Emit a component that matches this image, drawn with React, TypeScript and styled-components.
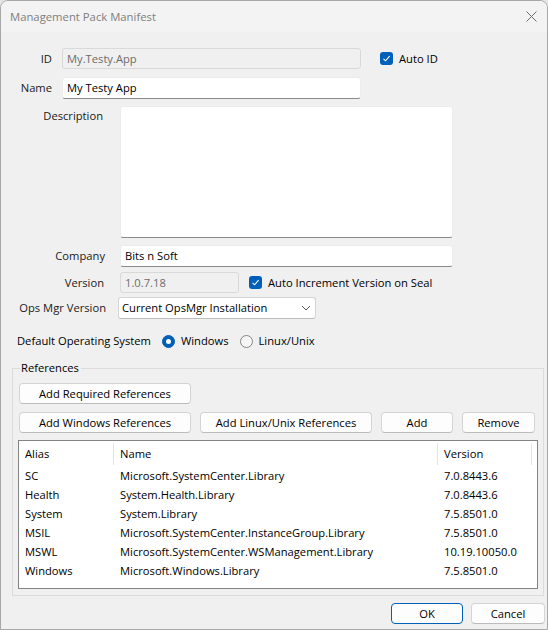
import styled, { createGlobalStyle } from "styled-components";

const Global = createGlobalStyle`
  html, body {
    margin: 0;
    padding: 0;
    background: #e4e4e4;
  }
  body {
    font-family: "Open Sans", "Noto Sans", sans-serif;
    font-size: 11.2px;
    color: #1a1a1a;
  }
`;

const Window = styled.div`
  width: 548px;
  height: 630px;
  box-sizing: border-box;
  border: 1px solid #a8a8a8;
  border-radius: 8px 8px 0 0;
  background: #f0f0f0;
  display: flex;
  flex-direction: column;
  overflow: hidden;
`;

const TitleBar = styled.div`
  height: 31px;
  flex: none;
  box-sizing: border-box;
  padding: 0 9px 1px 9px;
  background: #f3f3f3;
  display: flex;
  align-items: center;
  justify-content: space-between;
  color: #808080;
  font-size: 11.3px;
`;

const Body = styled.div`
  display: flex;
  flex-direction: column;
`;

const Row = styled.div<{ $mt: number; $h: number; $pl?: number }>`
  display: flex;
  align-items: center;
  margin-top: ${(p) => p.$mt}px;
  height: ${(p) => p.$h}px;
  padding-left: ${(p) => p.$pl ?? 0}px;
`;

const Label = styled.div<{ $w: number; $gap: number; $top?: boolean }>`
  width: ${(p) => p.$w}px;
  margin-right: ${(p) => p.$gap}px;
  text-align: right;
  flex: none;
  white-space: nowrap;
  align-self: ${(p) => (p.$top ? "flex-start" : "center")};
  padding-top: ${(p) => (p.$top ? 2 : 0)}px;
  padding-bottom: ${(p) => (p.$top ? 0 : 1)}px;
`;

const Field = styled.div<{ $w: number; $h: number; $disabled?: boolean }>`
  width: ${(p) => p.$w}px;
  height: ${(p) => p.$h}px;
  box-sizing: border-box;
  flex: none;
  display: flex;
  align-items: center;
  padding: 0 0 1px 4px;
  border-radius: 3px;
  background: ${(p) => (p.$disabled ? "#f0f0f0" : "#ffffff")};
  color: ${(p) => (p.$disabled ? "#6d6d6d" : "#000000")};
  border: 1px solid ${(p) => (p.$disabled ? "#d9d9d9" : "#ececec")};
  border-bottom-color: ${(p) => (p.$disabled ? "#d9d9d9" : "#8a8a8a")};
`;

const TextArea = styled(Field)`
  align-items: flex-start;
`;

const Combo = styled.div`
  width: 198px;
  height: 22px;
  box-sizing: border-box;
  flex: none;
  display: flex;
  align-items: center;
  justify-content: space-between;
  padding: 0 4px 1px 3px;
  background: #ffffff;
  border: 1px solid #d4d4d4;
  border-bottom-color: #bdbdbd;
  border-radius: 3px;
  color: #000;
`;

const CheckBox = styled.span<{ $ml: number }>`
  width: 13px;
  height: 13px;
  flex: none;
  margin-left: ${(p) => p.$ml}px;
  margin-right: 6px;
  background: #005fb8;
  border-radius: 3px;
  display: flex;
  align-items: center;
  justify-content: center;
`;

const Radio = styled.span<{ $on?: boolean; $ml: number }>`
  width: 13px;
  height: 13px;
  flex: none;
  box-sizing: border-box;
  margin-left: ${(p) => p.$ml}px;
  margin-right: 6px;
  border-radius: 50%;
  background: ${(p) => (p.$on ? "#005fb8" : "#f6f6f6")};
  border: 1px solid ${(p) => (p.$on ? "#005fb8" : "#858585")};
  display: flex;
  align-items: center;
  justify-content: center;
  &::after {
    content: "";
    display: ${(p) => (p.$on ? "block" : "none")};
    width: 5px;
    height: 5px;
    border-radius: 50%;
    background: #ffffff;
  }
`;

const Text = styled.span`
  color: #000;
  white-space: nowrap;
  padding-bottom: 1px;
`;

const Group = styled.div`
  margin: 9px 3px 0 11px;
  display: flex;
  flex-direction: column;
`;

const GroupHead = styled.div`
  height: 16px;
  display: flex;
  align-items: center;
`;

const Corner = styled.div`
  width: 8px;
  height: 8px;
  align-self: flex-end;
  border-left: 1px solid #dcdcdc;
  border-top: 1px solid #dcdcdc;
  box-sizing: border-box;
`;

const Legend = styled.span`
  padding: 0 2px 1px 1px;
  color: #000;
`;

const Rule = styled.div`
  flex: 1;
  height: 8px;
  align-self: flex-end;
  border-right: 1px solid #dcdcdc;
  border-top: 1px solid #dcdcdc;
  box-sizing: border-box;
`;

const GroupBody = styled.div`
  border: 1px solid #dcdcdc;
  border-top: none;
  padding: 7px 0 6px 6px;
  display: flex;
  flex-direction: column;
`;

const ButtonRow = styled.div<{ $mt: number }>`
  display: flex;
  gap: 9px;
  margin-top: ${(p) => p.$mt}px;
`;

const Button = styled.div<{ $w: number; $default?: boolean }>`
  width: ${(p) => p.$w}px;
  height: 21px;
  box-sizing: border-box;
  padding-bottom: 1px;
  display: flex;
  align-items: center;
  justify-content: center;
  background: #fdfdfd;
  border: 1px solid ${(p) => (p.$default ? "#005fb8" : "#d4d4d4")};
  border-bottom-color: ${(p) => (p.$default ? "#005fb8" : "#bcbcbc")};
  border-radius: 4px;
  color: #000;
`;

const List = styled.div`
  margin-top: 7px;
  width: 520px;
  margin-left: -1px;
  height: 149px;
  box-sizing: border-box;
  background: #ffffff;
  border: 1px solid #838383;
  display: flex;
  flex-direction: column;
`;

const ListRow = styled.div<{ $head?: boolean }>`
  display: grid;
  grid-template-columns: 95px 324px 94px;
  height: ${(p) => (p.$head ? 25 : 19)}px;
  align-items: center;
  flex: none;
  color: #000;
`;

const Cell = styled.div<{ $head?: boolean }>`
  padding: 0 0 1px 6px;
  box-sizing: border-box;
  height: ${(p) => (p.$head ? 22 : 19)}px;
  display: flex;
  align-items: center;
  white-space: nowrap;
  border-right: 1px solid ${(p) => (p.$head ? "#e5e5e5" : "transparent")};
`;

const Footer = styled.div`
  display: flex;
  justify-content: flex-end;
  gap: 8px;
  margin-top: 7px;
  padding-right: 2px;
`;

const refs = [
  ["SC", "Microsoft.SystemCenter.Library", "7.0.8443.6"],
  ["Health", "System.Health.Library", "7.0.8443.6"],
  ["System", "System.Library", "7.5.8501.0"],
  ["MSIL", "Microsoft.SystemCenter.InstanceGroup.Library", "7.5.8501.0"],
  ["MSWL", "Microsoft.SystemCenter.WSManagement.Library", "10.19.10050.0"],
  ["Windows", "Microsoft.Windows.Library", "7.5.8501.0"],
];

const Tick = () => (
  <svg width="9" height="9" viewBox="0 0 9 9">
    <polyline points="1.5,4.8 3.6,6.8 7.6,2.2" fill="none" stroke="#fff" strokeWidth="1.1" />
  </svg>
);

export default function App() {
  return (
    <Window>
      <Global />
      <TitleBar>
        <span>Management Pack Manifest</span>
        <svg width="11" height="11" viewBox="0 0 11 11" style={{ marginRight: 1 }}>
          <path d="M0.5 0.5 L10.5 10.5 M10.5 0.5 L0.5 10.5" stroke="#6e6e6e" strokeWidth="1" />
        </svg>
      </TitleBar>
      <Body>
        <Row $mt={16} $h={21}>
          <Label $w={51} $gap={10}>ID</Label>
          <Field $w={299} $h={21} $disabled>My.Testy.App</Field>
          <CheckBox $ml={19}><Tick /></CheckBox>
          <Text>Auto ID</Text>
        </Row>
        <Row $mt={8} $h={22}>
          <Label $w={51} $gap={10}>Name</Label>
          <Field $w={299} $h={22}>My Testy App</Field>
        </Row>
        <Row $mt={7} $h={132}>
          <Label $w={102} $gap={17} $top>Description</Label>
          <TextArea $w={333} $h={132} />
        </Row>
        <Row $mt={7} $h={22}>
          <Label $w={104} $gap={15}>Company</Label>
          <Field $w={333} $h={22}>Bits n Soft</Field>
        </Row>
        <Row $mt={5} $h={21}>
          <Label $w={103} $gap={16}>Version</Label>
          <Field $w={119} $h={21} $disabled>1.0.7.18</Field>
          <CheckBox $ml={10}><Tick /></CheckBox>
          <Text>Auto Increment Version on Seal</Text>
        </Row>
        <Row $mt={4} $h={22}>
          <Label $w={105} $gap={12}>Ops Mgr Version</Label>
          <Combo>
            <span>Current OpsMgr Installation</span>
            <svg width="10" height="6" viewBox="0 0 10 6">
              <polyline points="1,1 5,5 9,1" fill="none" stroke="#555" strokeWidth="1" />
            </svg>
          </Combo>
        </Row>
        <Row $mt={12} $h={20} $pl={16}>
          <Text>Default Operating System</Text>
          <Radio $on $ml={11} />
          <Text>Windows</Text>
          <Radio $ml={11} />
          <Text>Linux/Unix</Text>
        </Row>
        <Group>
          <GroupHead>
            <Corner />
            <Legend>References</Legend>
            <Rule />
          </GroupHead>
          <GroupBody>
            <ButtonRow $mt={0}>
              <Button $w={172}>Add Required References</Button>
            </ButtonRow>
            <ButtonRow $mt={8}>
              <Button $w={172}>Add Windows References</Button>
              <Button $w={172}>Add Linux/Unix References</Button>
              <Button $w={72}>Add</Button>
              <Button $w={73}>Remove</Button>
            </ButtonRow>
            <List>
              <ListRow $head>
                <Cell $head>Alias</Cell>
                <Cell $head>Name</Cell>
                <Cell $head>Version</Cell>
              </ListRow>
              {refs.map(([alias, name, version]) => (
                <ListRow key={alias}>
                  <Cell>{alias}</Cell>
                  <Cell>{name}</Cell>
                  <Cell>{version}</Cell>
                </ListRow>
              ))}
            </List>
          </GroupBody>
        </Group>
        <Footer>
          <Button $w={72} $default>OK</Button>
          <Button $w={74}>Cancel</Button>
        </Footer>
      </Body>
    </Window>
  );
}
